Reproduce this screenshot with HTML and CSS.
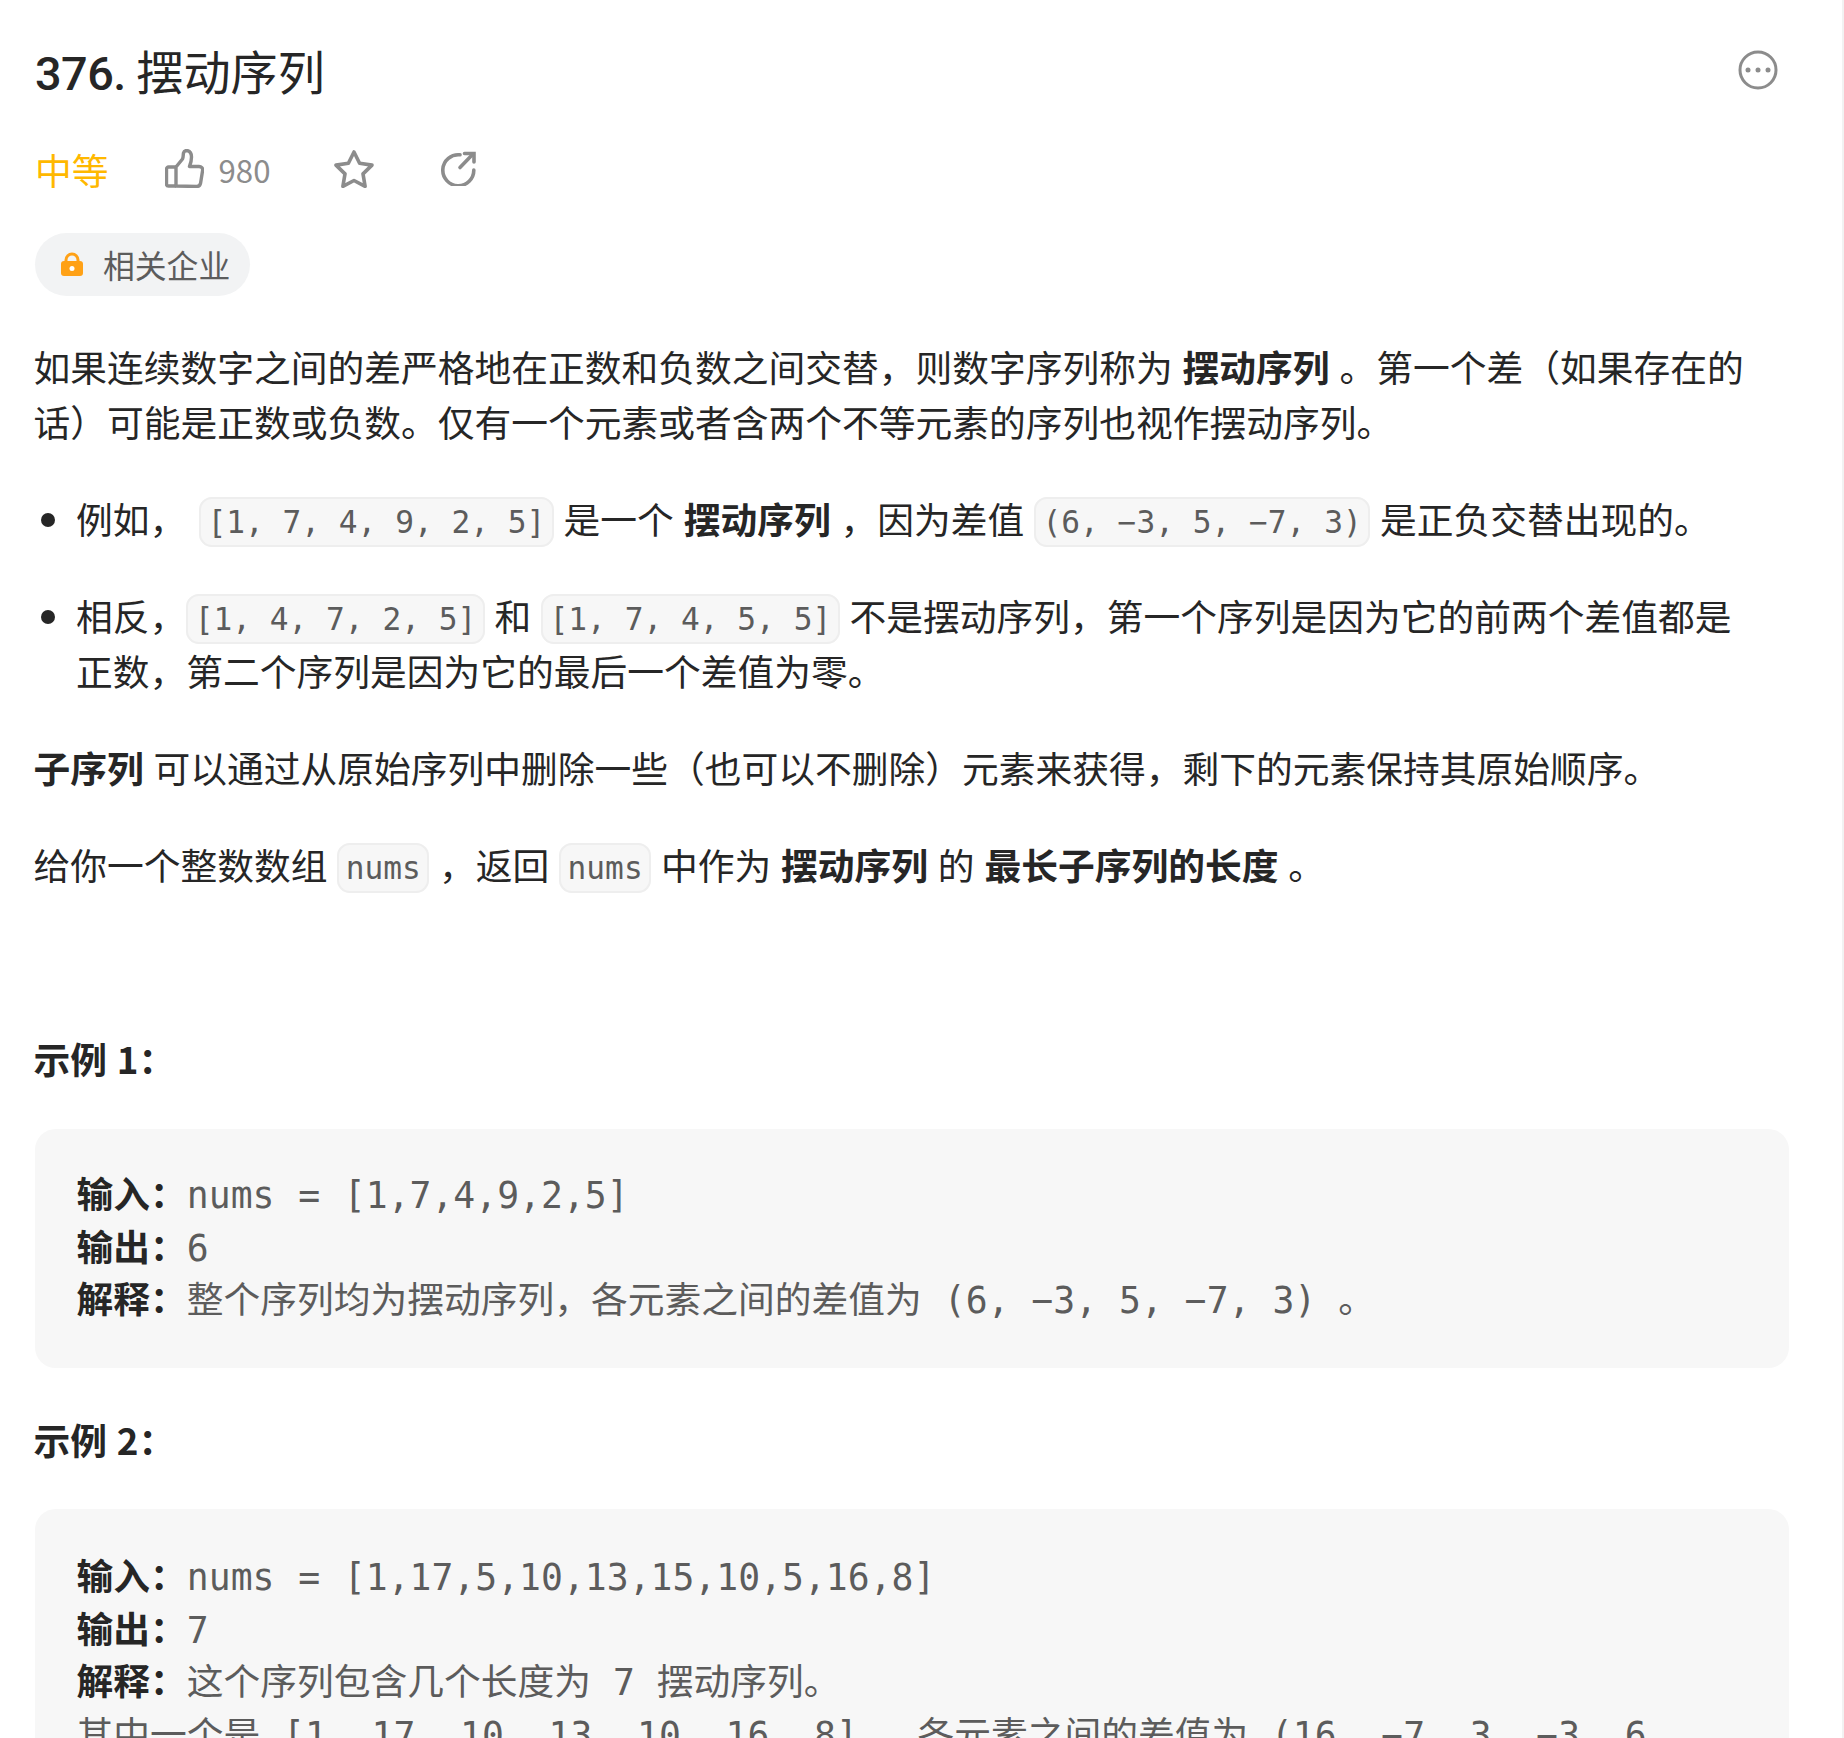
FILE: index.html
```html
<!DOCTYPE html>
<html lang="zh-CN">
<head>
<meta charset="utf-8">
<title>376. 摆动序列</title>
<link rel="stylesheet" href="styles.css">
</head>
<body>
<main class="page">
  <header class="title-row">
    <h1 class="title"><span class="title-num">376.</span> 摆动序列</h1>
    <svg class="more-icon" viewBox="0 0 40 40" fill="none"><circle cx="20" cy="20" r="18" stroke="#8c8c8c" stroke-width="3"/><circle cx="10" cy="20" r="2.5" fill="#8c8c8c"/><circle cx="20" cy="20" r="2.5" fill="#8c8c8c"/><circle cx="30" cy="20" r="2.5" fill="#8c8c8c"/></svg>
  </header>
  <div class="meta-row">
    <span class="difficulty">中等</span>
    <svg class="icon-thumb" viewBox="0 0 39 39" fill="none" stroke="#8c8c8c" stroke-width="3.400" stroke-linejoin="round"><path d="M11 18H3.500a2 2 0 0 0-2 2v15a2 2 0 0 0 2 2H11"/><path d="M11 37V18l6.500-8c1-2 .5-4 1-6 .5-2 2-2.500 3.500-2.500 3 .5 4.500 3.500 4.500 6.500 0 3-1 7-2 9.500h9.500c2.500 0 4 1.500 3.600 4l-2 12.500c-.4 2.200-1.700 3.500-4 3.500z"/></svg>
    <span class="likes">980</span>
    <svg class="icon-star" viewBox="0 0 40 38" fill="none" stroke="#8c8c8c" stroke-width="3.600" stroke-linejoin="round"><path d="M20 2l5.600 11.300 12.400 1.800-9 8.800 2.100 12.400L20 30.500 8.900 36.300 11 23.900l-9-8.800 12.400-1.800z"/></svg>
    <svg class="icon-share" viewBox="0 0 35 35" fill="none" stroke="#8c8c8c" stroke-width="3.600" stroke-linecap="round"><path d="M19 3.800A15.500 15.500 0 1 0 32.800 19"/><path d="M19 16.500L32 3"/><path d="M23.500 2.500h9.500V11"/></svg>
  </div>
  <div class="company-pill">
    <svg class="icon-lock" viewBox="0 0 24 24"><path fill="none" stroke="#ffa116" stroke-width="3" d="M6 11V8a6 6 0 0 1 12 0v3"/><rect x="1" y="9" width="22" height="15" rx="3" fill="#ffa116"/><circle cx="12" cy="16.500" r="2.500" fill="#fff"/></svg>
    <span>相关企业</span>
  </div>
  <article class="content">
    <p>如果连续数字之间的差严格地在正数和负数之间交替，则数字序列称为<strong> 摆动序列 </strong>。第一个差（如果存在的话）可能是正数或负数。仅有一个元素或者含两个不等元素的序列也视作摆动序列。</p>
    <ul>
      <li>例如， <code class="code-first">[1, 7, 4, 9, 2, 5]</code> 是一个<strong> 摆动序列 </strong>，因为差值 <code>(6, −3, 5, −7, 3)</code> 是正负交替出现的。</li>
      <li>相反，<code>[1, 4, 7, 2, 5]</code> 和 <code>[1, 7, 4, 5, 5]</code> 不是摆动序列，第一个序列是因为它的前两个差值都是正数，第二个序列是因为它的最后一个差值为零。</li>
    </ul>
    <p><strong>子序列</strong> 可以通过从原始序列中删除一些（也可以不删除）元素来获得，剩下的元素保持其原始顺序。</p>
    <p>给你一个整数数组 <code>nums</code> ，返回 <code>nums</code> 中作为<strong> 摆动序列 </strong>的<strong> 最长子序列的长度 </strong>。</p>
    <p>&nbsp;</p>
    <p><strong>示例 1：</strong></p>
    <pre><strong>输入：</strong><span class="input">nums = [1,7,4,9,2,5]</span>
<strong>输出：</strong>6
<strong>解释：</strong><span class="zh">整个序列均为摆动序列，各元素之间的差值为</span> (6, −3, 5, −7, 3) <span class="zh">。</span></pre>
    <p><strong>示例 2：</strong></p>
    <pre><strong>输入：</strong><span class="input">nums = [1,17,5,10,13,15,10,5,16,8]</span>
<strong>输出：</strong>7
<strong>解释：</strong><span class="zh">这个序列包含几个长度为</span> 7 <span class="zh">摆动序列。</span>
<span class="long"><span class="zh">其中一个是</span> [1, 17, 10, 13, 10, 16, 8] <span class="zh">，各元素之间的差值为</span> (16, −7, 3, −3, 6,
−8) <span class="zh">。</span></span></pre>
  </article>
</main>
</body>
</html>
```

FILE: styles.css
```css
* { box-sizing: border-box; }
html, body { margin: 0; padding: 0; height: 1738px; overflow: hidden; background: #fff; }
body {
  font-family: "Noto Sans CJK SC", "Noto Sans", sans-serif;
  font-size: 36.75px;
  line-height: 54.6px;
  color: #262626;
  border-right: 2px solid #f2f2f2;
}
.page { padding: 34.6px 53px 0 35px; }
.title-row { display: flex; justify-content: space-between; align-items: center; height: 70px; }
.title { margin: 0; font-size: 47.1px; font-weight: 400; line-height: 70px; color: #262626; }
.title-num { font-family: Roboto, sans-serif; font-weight: 500; font-size: 46.8px; line-height: 1; letter-spacing: -0.5px; }
.more-icon { width: 40px; height: 40px; margin-right: 11px; margin-top: 1px; }
.meta-row { display: flex; align-items: center; height: 40px; margin-top: 44.4px; }
.difficulty { color: #ffb800; }
.icon-thumb { width: 39px; height: 39px; margin-left: 56px; }
.likes { color: #8c8c8c; font-size: 31.2px; margin: 2px 0 0 15px; width: 50px; }
.icon-star { width: 40px; height: 38px; margin-left: 65px; }
.icon-share { width: 35px; height: 35px; margin-left: 67px; }
.company-pill {
  display: inline-flex;
  align-items: center;
  height: 63px;
  margin-top: 44px;
  padding: 0 20px 0 25px;
  border-radius: 32px;
  background: #f2f3f4;
  color: #5c5c5c;
  font-size: 31.8px;
}
.icon-lock { width: 24px; height: 24px; margin-right: 19px; }
.content { margin: 43.2px 0 0 -1.5px; word-spacing: 1.5px; }
p { margin: 0 0 42.6px; }
ul { margin: 0 0 42.6px; padding: 0 25px 0 42.4px; }
li { margin-bottom: 42.6px; }
li:last-child { margin-bottom: 0; }
strong { font-weight: 700; }
code {
  font-family: "DejaVu Sans Mono", "Noto Sans CJK SC", monospace;
  font-size: 31.2px;
  line-height: 1;
  padding: 5px 6.5px;
  color: #5c5c5c;
  background: #f7f7f7;
  border: 2.6px solid #eee;
  border-radius: 13px;
  word-spacing: 0;
  vertical-align: 1px;
}
.code-first { margin-left: 3px; }
pre {
  margin: 0 0 43.3px 1.5px;
  padding: 41.6px 41.6px 40.6px;
  background: #f7f7f7;
  border-radius: 20.8px;
  font-family: "DejaVu Sans Mono", "Noto Sans CJK SC", monospace;
  font-size: 36.4px;
  line-height: 52.5px;
  color: #5c5c5c;
  white-space: pre-wrap;
  word-spacing: 0;
}
pre:last-of-type { padding-top: 43.6px; }
pre strong, .zh { font-family: "Noto Sans CJK SC", sans-serif; font-size: 36.75px; line-height: 1; }
pre strong { color: #262626; }
.input { word-spacing: 1.8px; }
.long { word-spacing: 0.85px; }
```
